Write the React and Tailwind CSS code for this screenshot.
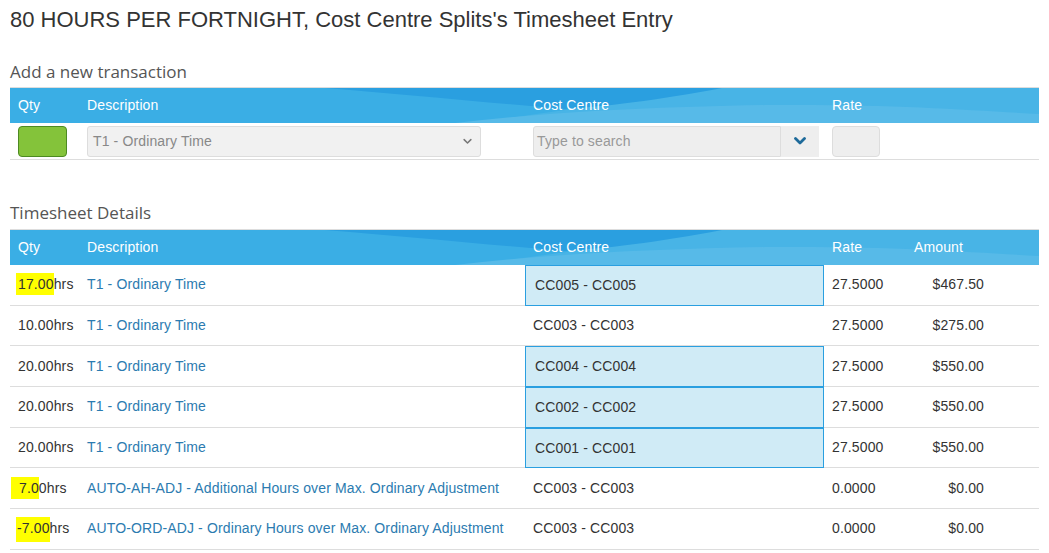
import React from 'react';

const rows = [
  { qty: '17.00', hl: 'a', desc: 'T1 - Ordinary Time', cc: 'CC005 - CC005', sel: true, rate: '27.5000', amt: '$467.50' },
  { qty: '10.00', desc: 'T1 - Ordinary Time', cc: 'CC003 - CC003', rate: '27.5000', amt: '$275.00' },
  { qty: '20.00', desc: 'T1 - Ordinary Time', cc: 'CC004 - CC004', sel: true, rate: '27.5000', amt: '$550.00' },
  { qty: '20.00', desc: 'T1 - Ordinary Time', cc: 'CC002 - CC002', sel: true, rate: '27.5000', amt: '$550.00' },
  { qty: '20.00', desc: 'T1 - Ordinary Time', cc: 'CC001 - CC001', sel: true, rate: '27.5000', amt: '$550.00' },
  { qty: '7.00', hl: 'b', desc: 'AUTO-AH-ADJ - Additional Hours over Max. Ordinary Adjustment', cc: 'CC003 - CC003', rate: '0.0000', amt: '$0.00' },
  { qty: '-7.00', hl: 'c', desc: 'AUTO-ORD-ADJ - Ordinary Hours over Max. Ordinary Adjustment', cc: 'CC003 - CC003', rate: '0.0000', amt: '$0.00' },
];

// decorative wave behind the blue header bar
const HeaderWave = () => (
  <svg className="absolute inset-0 h-full w-full" viewBox="0 0 1029 35" preserveAspectRatio="none">
    <rect width="1029" height="35" fill="#3aaee5" />
    <path d="M700,0 L1029,0 L1029,35 L460,35 C560,22 640,10 700,0 Z" fill="#48b4e6" />
    <path d="M445,35 C540,24 640,19 760,17 C880,16 960,22 1029,26 L1029,35 Z" fill="#57bae8" />
    <path d="M315,0 L712,0 C650,12 590,19 555,21 C470,14 390,6 315,0 Z" fill="#2a9fe0" />
  </svg>
);

const HeaderBar = ({ amount }) => (
  <div className="relative h-[36px] border-t border-[#dddddd] text-[14px] text-white">
    <HeaderWave />
    <div className="relative flex h-full items-center">
      <div className="w-[69px] pl-2">Qty</div>
      <div className="w-[446px] pl-2">Description</div>
      <div className="w-[299px] pl-2">Cost Centre</div>
      <div className="w-[82px] pl-2">Rate</div>
      {amount && <div className="w-[90px] pl-2">Amount</div>}
    </div>
  </div>
);

const Chevron = ({ className, stroke, width }) => (
  <svg className={className} viewBox="0 0 12 8" fill="none">
    <polyline points="1.5,1.5 6,6 10.5,1.5" stroke={stroke} strokeWidth={width} strokeLinecap="round" strokeLinejoin="round" />
  </svg>
);

const Qty = ({ r }) => {
  if (r.hl === 'a')
    return (
      <span>
        <span className="-ml-[2px] bg-[#ffff00] py-[3px] pl-[2px]">17.00</span>hrs
      </span>
    );
  if (r.hl === 'b')
    return (
      <span>
        <span className="-ml-[7px] bg-[#ffff00] py-[3px] pl-[8px]">7.0</span>0hrs
      </span>
    );
  if (r.hl === 'c')
    return (
      <span>
        <span className="-ml-[2px] bg-[#ffff00] pt-[3px] pb-[6px] pl-[1px]">-7.00</span>hrs
      </span>
    );
  return <span>{r.qty}hrs</span>;
};

export default function App() {
  return (
    <div className="min-h-screen bg-white px-[10px] font-['Liberation_Sans',Arial,sans-serif] text-[14px] tracking-[0.13px] text-[#333333]">
      <h1 className="pt-[8px] text-[22px] leading-[24px] tracking-normal">
        80 HOURS PER FORTNIGHT, Cost Centre Splits's Timesheet Entry
      </h1>

      <h2 className="mt-[28px] mb-[3px] font-['Open_Sans',sans-serif] text-[17px] leading-[24px] tracking-normal text-[#555555]">
        Add a new transaction
      </h2>
      <HeaderBar />
      <div className="flex h-[37px] items-center border-b border-[#dddddd]">
        <div className="w-[69px] pl-2">
          <div className="h-[31px] w-[49px] rounded-[4px] border border-[#4d8a22] bg-[#84c33a]" />
        </div>
        <div className="w-[446px] pl-2">
          <div className="flex h-[31px] w-[394px] items-center justify-between rounded-[3px] border border-[#dddddd] bg-[#f1f1f1] pl-[5px] pr-[8px] text-[#888888]">
            <span>T1 - Ordinary Time</span>
            <Chevron className="h-[7px] w-[9px]" stroke="#777777" width="2" />
          </div>
        </div>
        <div className="w-[299px] pl-2">
          <div className="flex h-[31px] w-[286px]">
            <div className="flex flex-1 items-center rounded-l-[3px] border border-[#dddddd] bg-[#eeeeee] pl-[3px] text-[#999999]">
              Type to search
            </div>
            <div className="flex w-[38px] items-center justify-center bg-[#eeeeee]">
              <Chevron className="h-[8px] w-[12px]" stroke="#1d6a9a" width="2.8" />
            </div>
          </div>
        </div>
        <div className="w-[82px] pl-2">
          <div className="h-[31px] w-[48px] rounded-[4px] border border-[#dddddd] bg-[#eeeeee]" />
        </div>
      </div>

      <h2 className="mt-[41px] mb-[4px] font-['Open_Sans',sans-serif] text-[17px] leading-[24px] tracking-normal text-[#555555]">
        Timesheet Details
      </h2>
      <HeaderBar amount />
      <div>
        {rows.map((r, i) => (
          <div key={i} className="flex h-[40.7px] items-stretch border-b border-[#dddddd]">
            <div className="flex w-[69px] items-center pl-2">
              <Qty r={r} />
            </div>
            <div className="flex w-[446px] items-center pl-2 text-[#2b7bb0]">{r.desc}</div>
            <div className="w-[299px]">
              {r.sel ? (
                <div className="-mb-px flex h-[calc(100%+1px)] items-center border border-[#2a9fe0] bg-[#d0ebf6] pl-[9px]">
                  {r.cc}
                </div>
              ) : (
                <div className="flex h-full items-center pl-2">{r.cc}</div>
              )}
            </div>
            <div className="flex w-[82px] items-center pl-2">{r.rate}</div>
            <div className="flex w-[78px] items-center justify-end">{r.amt}</div>
          </div>
        ))}
      </div>
    </div>
  );
}
